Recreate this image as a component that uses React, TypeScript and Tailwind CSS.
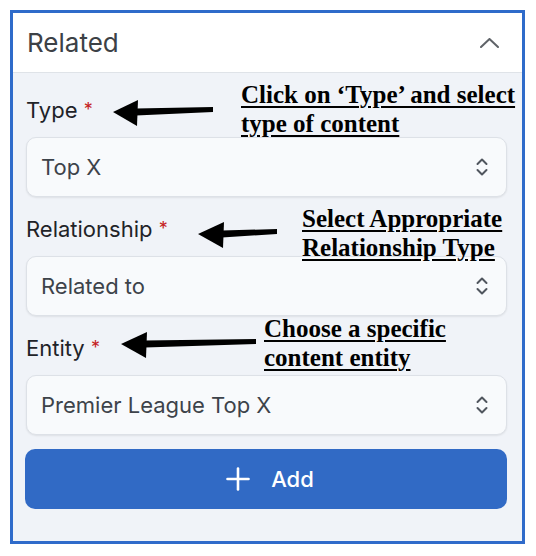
import React from 'react'

const fields = [
  { label: 'Type', value: 'Top X' },
  { label: 'Relationship', value: 'Related to' },
  { label: 'Entity', value: 'Premier League Top X' },
] as const

const notes = [
  { lines: ['Click on \u2018Type\u2019 and select', 'type of content'], cls: 'left-[241px] top-[80px]' },
  { lines: ['Select Appropriate', 'Relationship Type'], cls: 'left-[302px] top-[204px]' },
  { lines: ['Choose a specific', 'content entity'], cls: 'left-[264px] top-[314px]' },
] as const

function UpDown() {
  return (
    <svg width="12" height="20" viewBox="0 0 12 20" fill="none" stroke="#50565e" strokeWidth="2" strokeLinecap="round" strokeLinejoin="round">
      <polyline points="1.5,7 6,2.5 10.5,7" />
      <polyline points="1.5,13 6,17.5 10.5,13" />
    </svg>
  )
}

function Arrow({ tip, back, tail, y, className }: { tip: number; back: number; tail: number; y: number; className: string }) {
  // drawn in local coords; tip at x=0
  const w = tail - tip
  const hb = back - tip
  return (
    <svg className={`absolute ${className}`} width={w + 2} height="28" viewBox={`0 0 ${w + 2} 28`}>
      <polygon points={`0,${y} ${hb},1 ${hb - 1},27`} fill="#000" />
      <polygon points={`${hb - 2},${y - 3.5} ${w},${y - 5} ${w},${y} ${hb - 2},${y + 3.5}`} fill="#000" />
    </svg>
  )
}

export default function App() {
  return (
    <div className="relative w-[536px] h-[556px] bg-white" style={{ fontFamily: 'Inter, "Noto Sans", sans-serif' }}>
      <div className="absolute left-[10px] top-[10px] w-[515px] h-[534px] border-[3px] border-[#2f6bca] bg-[#f0f3f8] flex flex-col">
        <div className="h-[60px] shrink-0 bg-white border-b border-[#dfe3e8] flex items-center justify-between pl-[14px] pr-[23px]">
          <span className="text-[26px] text-[#3c4146] leading-none pt-[1px]">Related</span>
          <svg width="19" height="10" viewBox="0 0 19 10" fill="none" stroke="#5f6368" strokeWidth="2" strokeLinecap="round" strokeLinejoin="round">
            <polyline points="1,9 9.5,1 18,9" />
          </svg>
        </div>
        <div className="px-[13px] pt-[23px] pb-[31px] flex flex-col">
          {fields.map((f, i) => (
            <div key={f.label} className={i > 0 ? 'mt-[18px]' : ''}>
              <div className="h-[28px] leading-[28px] text-[22px] text-[#1f2328]">
                {f.label} <span className="text-[#c5221f] text-[18px] align-top">*</span>
              </div>
              <div className="mt-[13px] h-[60px] w-[481px] rounded-[10px] border border-[#dde1e7] bg-[#f8fafc] shadow-[0_1px_2px_rgba(0,0,0,0.08)] flex items-center justify-between pl-[14px] pr-[18px]">
                <span className="text-[22px] text-[#3d434a]">{f.value}</span>
                <UpDown />
              </div>
            </div>
          ))}
          <button className="mt-[14px] h-[60px] w-[482px] -ml-[1px] pl-[8px] rounded-[10px] bg-[#316ac5] text-white flex items-center justify-center gap-[21px]">
            <svg width="24" height="24" viewBox="0 0 24 24" fill="none" stroke="#fff" strokeWidth="2.6" strokeLinecap="round">
              <line x1="12" y1="1.5" x2="12" y2="22.5" />
              <line x1="1.5" y1="12" x2="22.5" y2="12" />
            </svg>
            <span className="text-[22px] font-medium">Add</span>
          </button>
        </div>
      </div>

      <Arrow tip={113} back={138} tail={213} y={13} className="left-[113px] top-[99px]" />
      <Arrow tip={198} back={224} tail={277} y={13} className="left-[198px] top-[221px]" />
      <Arrow tip={121} back={147} tail={256} y={13} className="left-[121px] top-[331px]" />

      {notes.map((n) => (
        <div
          key={n.lines[0]}
          className={`absolute ${n.cls} text-[25px] leading-[29px] font-bold text-black underline decoration-2 underline-offset-[3px] whitespace-nowrap`}
          style={{ fontFamily: '"Liberation Serif", serif' }}
        >
          {n.lines.map((l) => (
            <div key={l}>{l}</div>
          ))}
        </div>
      ))}
    </div>
  )
}
